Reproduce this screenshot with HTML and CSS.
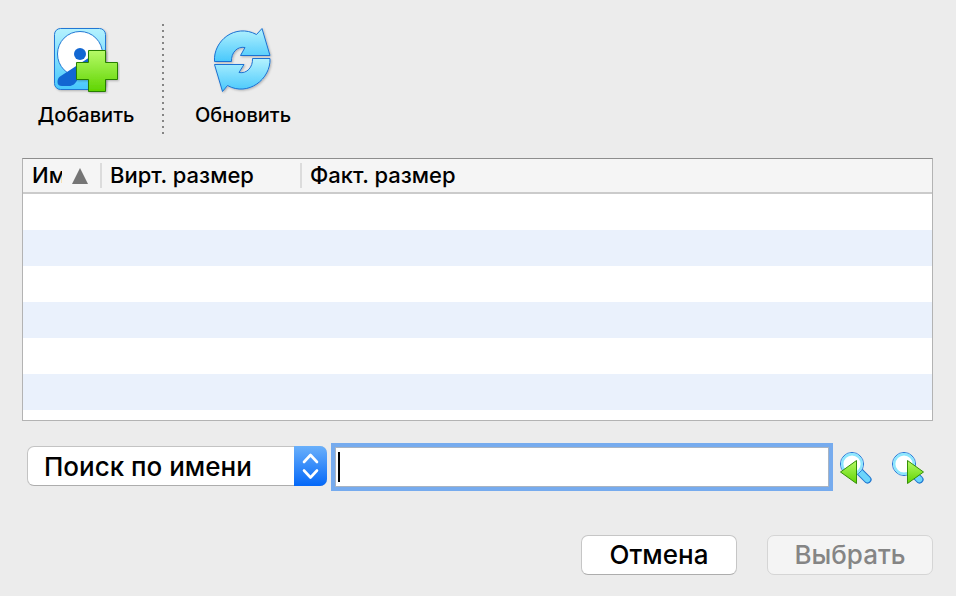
FILE: index.html
```html
<!DOCTYPE html>
<html lang="ru">
<head>
<meta charset="utf-8">
<meta name="viewport" content="width=device-width, initial-scale=1">
<title>Выбор жёсткого диска</title>
<link rel="stylesheet" href="styles.css">
</head>
<body>
<main class="dialog">
  <div class="toolbar" role="toolbar">
    <button class="tool" type="button">
      <svg class="tool-icon" viewBox="0 0 68 68" aria-hidden="true">
        <defs>
          <linearGradient id="sky" x1="0" y1="0" x2="0" y2="1"><stop offset="0" stop-color="#b4f2fe"/><stop offset="1" stop-color="#48c8fc"/></linearGradient>
          <linearGradient id="leaf" x1="0" y1="0" x2="0" y2="1"><stop offset="0" stop-color="#b6fa68"/><stop offset="1" stop-color="#5fd400"/></linearGradient>
          <filter id="soft" x="-20%" y="-20%" width="150%" height="150%"><feDropShadow dx="1" dy="1" stdDeviation="1" flood-opacity=".25"/></filter>
        </defs>
        <rect x="2.500" y="2.500" width="51" height="61" rx="6" fill="url(#sky)" stroke="#2077d4" filter="url(#soft)"/>
        <circle cx="28" cy="28" r="22.500" fill="#fff" stroke="#2479d4"/>
        <path d="M8 50.500L38 31V42L26 53C23 58 21 60 17 60H10Q5.500 60 5.500 56Q5.500 52 8 50.500Z" fill="#1267d2"/>
        <circle cx="28" cy="28" r="6" fill="#1267d2"/>
        <path d="M36.500 24.500h17v12h12v17h-12v12h-17v-12h-12v-17h12z" fill="url(#leaf)" stroke="#287f00" filter="url(#soft)"/>
      </svg>
      <span>Добавить</span>
    </button>
    <div class="divider" role="separator"></div>
    <button class="tool" type="button">
      <svg class="tool-icon" viewBox="0 0 68 68" aria-hidden="true">
        <g fill="url(#sky)" stroke="#1b71d2" stroke-linejoin="round" filter="url(#soft)">
          <path d="M5.500 35.500C4 15 26-3 47.500 8.500L53 2.500L61 29.500H31.500L36 21.500C28 20 22 27 22.500 35.500Z"/>
          <path d="M5.500 38.500H35L30 46.500C38 48 44 41 43.500 32.500H61C62 53 39 71 18.500 59.500L13.500 65.500Z"/>
        </g>
      </svg>
      <span>Обновить</span>
    </button>
  </div>

  <div class="list">
    <table class="media">
      <colgroup><col class="col-name"><col class="col-virtual"><col></colgroup>
      <thead>
        <tr>
          <th scope="col" aria-sort="ascending"><div class="heading"><span class="clip">Имя</span><svg class="sort" viewBox="0 0 16 16" aria-hidden="true"><path d="M8 0L16 16H0Z" fill="#757575"/></svg></div></th>
          <th scope="col"><div class="heading">Вирт. размер</div></th>
          <th scope="col"><div class="heading">Факт. размер</div></th>
        </tr>
      </thead>
      <tbody>
        <tr><td></td><td></td><td></td></tr>
        <tr><td></td><td></td><td></td></tr>
        <tr><td></td><td></td><td></td></tr>
        <tr><td></td><td></td><td></td></tr>
        <tr><td></td><td></td><td></td></tr>
        <tr><td></td><td></td><td></td></tr>
      </tbody>
    </table>
  </div>

  <form class="search">
    <div class="picker">
      <select class="mode" aria-label="Режим поиска"><option>Поиск по имени</option></select>
      <svg class="stepper" viewBox="0 0 33 40" aria-hidden="true"><path d="M10 16L16.500 9L23 16M10 24.500L16.500 31.500L23 24.500" fill="none" stroke="#fff" stroke-width="2.600" stroke-linecap="round" stroke-linejoin="round"/></svg>
    </div>
    <input class="query" type="text" aria-label="Строка поиска" autofocus>
    <button class="step" type="button" aria-label="Предыдущий">
      <svg viewBox="0 0 36 36" aria-hidden="true">
        <path d="M22 22L29.500 29.500" stroke="#1f75cf" stroke-width="8" stroke-linecap="round"/>
        <path d="M22 22L29.300 29.300" stroke="#6cd5fb" stroke-width="6" stroke-linecap="round"/>
        <circle cx="14" cy="14" r="11.500" fill="#fff" stroke="#1b6fd6"/>
        <circle cx="14" cy="14" r="9.800" fill="none" stroke="#8ce6fd" stroke-width="2.400"/>
        <path d="M18.500 10.500V33.500L2.500 22Z" fill="url(#leaf)" stroke="#358f08" stroke-linejoin="round"/>
      </svg>
    </button>
    <button class="step" type="button" aria-label="Следующий">
      <svg viewBox="0 0 36 36" aria-hidden="true">
        <path d="M22 22L29.500 29.500" stroke="#1f75cf" stroke-width="8" stroke-linecap="round"/>
        <path d="M22 22L29.300 29.300" stroke="#6cd5fb" stroke-width="6" stroke-linecap="round"/>
        <circle cx="14" cy="14" r="11.500" fill="#fff" stroke="#1b6fd6"/>
        <circle cx="14" cy="14" r="9.800" fill="none" stroke="#8ce6fd" stroke-width="2.400"/>
        <path d="M17.500 10.500V33.500L33.500 22Z" fill="url(#leaf)" stroke="#358f08" stroke-linejoin="round"/>
      </svg>
    </button>
  </form>

  <div class="actions">
    <button class="action cancel" type="button">Отмена</button>
    <button class="action choose" type="button" disabled>Выбрать</button>
  </div>
</main>
</body>
</html>
```

FILE: styles.css
```css
* { box-sizing: border-box; }

body {
  margin: 0;
  background: #ececec;
  color: #000;
  font-family: Inter, "Liberation Sans", sans-serif;
  font-weight: 500;
}

button, input, select { font: inherit; color: inherit; }

.dialog { padding: 24px 23px 20px 22px; }

.toolbar { display: flex; height: 110px; }

.tool {
  display: flex;
  flex-direction: column;
  align-items: center;
  gap: 8px;
  width: 128px;
  padding: 2px 0 0;
  border: 0;
  background: none;
  font-size: 20px;
  line-height: 26px;
}

.tool-icon { width: 68px; height: 68px; }

.divider {
  width: 2px;
  margin: 0 15px 0 12px;
  background: repeating-linear-gradient(#858585 0 2px, transparent 2px 6px);
}

.list {
  height: 263px;
  margin-top: 24px;
  overflow: hidden;
  border: 1px solid #b3b3b3;
  border-top-color: #8d8d8d;
  background: #fff;
}

.media {
  width: 100%;
  table-layout: fixed;
  border-collapse: separate;
  border-spacing: 0;
}

.col-name { width: 79px; }
.col-virtual { width: 200px; }

.media th {
  height: 35px;
  padding: 0;
  border-bottom: 2px solid #cbcbcb;
  background: #f5f5f5;
  font-size: 22px;
  font-weight: 500;
  text-align: left;
}

.heading {
  display: flex;
  align-items: center;
  height: 25px;
  padding-left: 8px;
  line-height: 25px;
}

th:first-child .heading { padding-left: 9px; }
th:not(:last-child) .heading { border-right: 2px solid #dcdcdc; }

.clip {
  width: 30px;
  overflow: hidden;
}

.sort {
  flex: none;
  width: 16px;
  height: 16px;
  margin-left: 10px;
}

.media td { height: 36px; padding: 0; }
.media tbody tr:nth-child(even) { background: #eaf1fc; }

.search {
  display: flex;
  align-items: center;
  height: 48px;
  margin: 22px 7px 0 5px;
}

.picker {
  position: relative;
  flex: none;
  width: 300px;
  margin-bottom: 2px;
}

.mode {
  display: block;
  width: 100%;
  height: 40px;
  padding: 0 40px 0 16px;
  border: 1px solid #c3c3c3;
  border-bottom-color: #adadad;
  border-radius: 7px;
  appearance: none;
  background: #fff;
  font-size: 26px;
}

.stepper {
  position: absolute;
  top: 0;
  right: 0;
  width: 33px;
  height: 40px;
  border-radius: 0 7px 7px 0;
  background: linear-gradient(#6ab0fb, #0468f8);
  pointer-events: none;
}

.query {
  flex: 1;
  min-width: 0;
  height: 40px;
  margin: 0 9px 0 8px;
  padding: 0 4px;
  border: 1px solid #a9b4c2;
  outline: none;
  background: linear-gradient(#000, #000) 2px 4px / 2px 30px no-repeat #fff;
  box-shadow: 0 0 0 4px #76abee;
  caret-color: transparent;
  font-size: 26px;
}

.step {
  width: 36px;
  height: 36px;
  margin-top: 2px;
  padding: 0;
  border: 0;
  background: none;
}

.step + .step { margin-left: 16px; }
.step svg { display: block; }

.actions {
  display: flex;
  justify-content: flex-end;
  gap: 30px;
  margin-top: 44px;
}

.action {
  height: 40px;
  padding: 0 20px;
  border: 1px solid #c6c6c6;
  border-bottom-color: #adadad;
  border-radius: 7px;
  background: #fff;
  font-size: 26px;
  line-height: 38px;
}

.cancel { min-width: 156px; }
.choose { min-width: 166px; }

.action:disabled {
  border-color: #d5d5d5;
  background: #f4f4f4;
  color: #858585;
}
```
